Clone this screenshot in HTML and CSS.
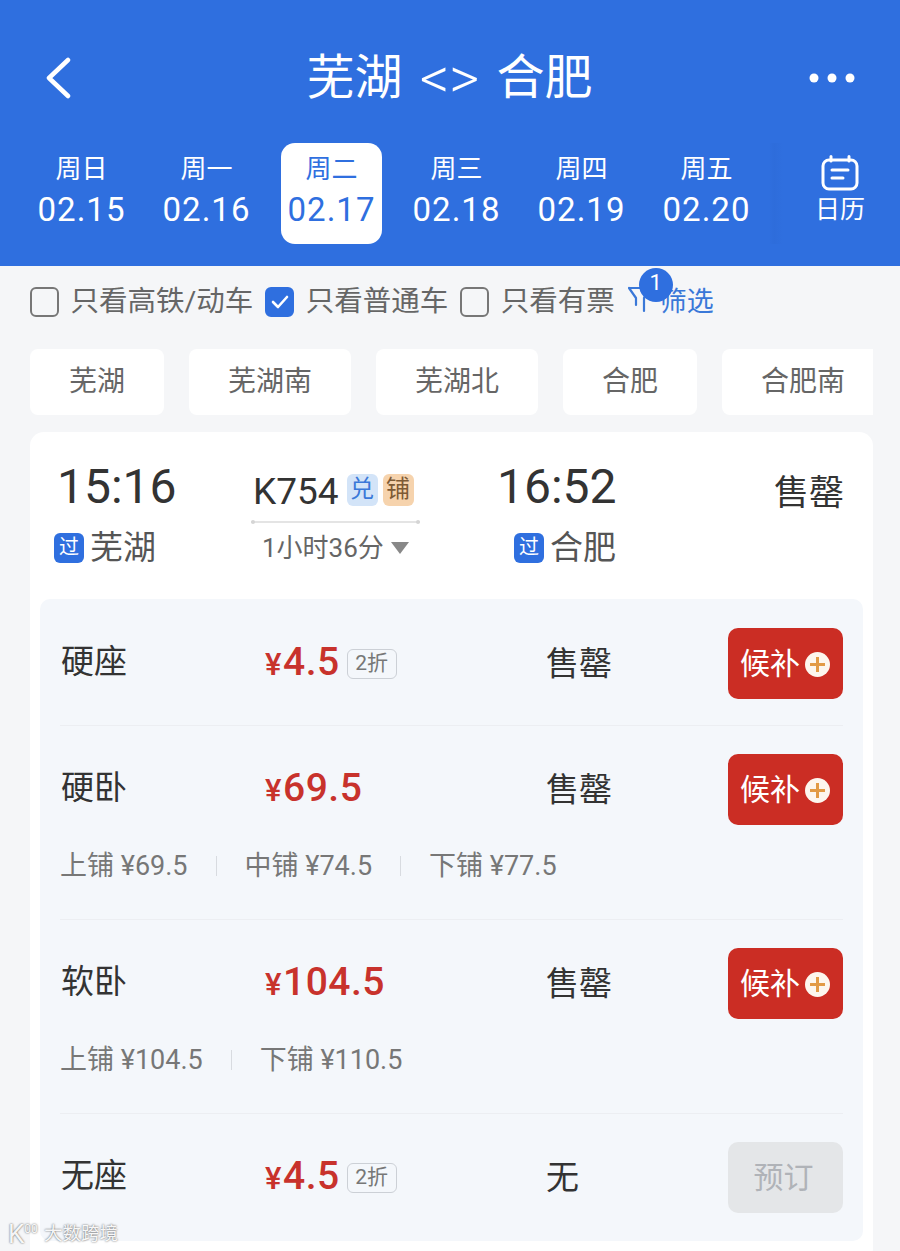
FILE: index.html
```html
<!DOCTYPE html>
<html lang="zh-CN">
<head>
    <meta charset="UTF-8">
    <meta name="viewport" content="width=device-width, initial-scale=1.0">
    <title>芜湖 &lt;&gt; 合肥</title>
    <link rel="stylesheet" href="styles.css">
</head>
<body>
    <div class="page">
        <header class="header">
            <div class="titlebar">
                <svg class="back" width="28" height="42" viewBox="0 0 28 42"><path d="M24 3 L5 21 L24 39" fill="none" stroke="#fff" stroke-width="4.5" stroke-linecap="round" stroke-linejoin="round"/></svg>
                <h1>芜湖<span class="swap">&lt;&gt;</span>合肥</h1>
                <svg class="more" width="46" height="10" viewBox="0 0 46 10"><circle cx="5" cy="5" r="4.5" fill="#fff"/><circle cx="23" cy="5" r="4.5" fill="#fff"/><circle cx="41" cy="5" r="4.5" fill="#fff"/></svg>
            </div>
            <div class="days">
                <div class="day"><span class="week">周日</span><span class="date">02.15</span></div>
                <div class="day"><span class="week">周一</span><span class="date">02.16</span></div>
                <div class="day active"><span class="week">周二</span><span class="date">02.17</span></div>
                <div class="day"><span class="week">周三</span><span class="date">02.18</span></div>
                <div class="day"><span class="week">周四</span><span class="date">02.19</span></div>
                <div class="day"><span class="week">周五</span><span class="date">02.20</span></div>
                <div class="calendar">
                    <svg width="38" height="36" viewBox="0 0 38 36" fill="none" stroke="#fff" stroke-width="3" stroke-linecap="round"><rect x="2" y="5" width="34" height="29" rx="6"/><path d="M10 1.5V6M28 1.5V6M11 15H27M11 23H22"/></svg>
                    <span>日历</span>
                </div>
            </div>
        </header>

        <main class="content">
            <div class="filters">
                <span class="check"></span><span class="check-label">只看高铁/动车</span>
                <span class="check on"><svg width="20" height="16" viewBox="0 0 20 16"><path d="M3 8 L8 13 L17 3" fill="none" stroke="#fff" stroke-width="2.6" stroke-linecap="round" stroke-linejoin="round"/></svg></span><span class="check-label">只看普通车</span>
                <span class="check"></span><span class="check-label">只看有票</span>
                <div class="filter-btn">
                    <svg width="24" height="28" viewBox="0 0 24 28"><path d="M1 3H23L16 13V26M1 3L8 13V20" fill="none" stroke="#3a78d8" stroke-width="2.2" stroke-linecap="round" stroke-linejoin="round"/></svg>
                    <span>筛选</span>
                    <b class="badge">1</b>
                </div>
            </div>

            <div class="stations">
                <div class="chip">芜湖</div>
                <div class="chip">芜湖南</div>
                <div class="chip">芜湖北</div>
                <div class="chip">合肥</div>
                <div class="chip">合肥南</div>
            </div>

            <section class="card">
                <div class="train">
                    <div class="stop">
                        <div class="time">15:16</div>
                        <div class="place"><i class="pass">过</i>芜湖</div>
                    </div>
                    <div class="middle">
                        <div class="code">K754<i class="tag blue">兑</i><i class="tag orange">铺</i></div>
                        <div class="line"></div>
                        <div class="duration">1小时36分<span class="caret"></span></div>
                    </div>
                    <div class="stop arrive">
                        <div class="time">16:52</div>
                        <div class="place"><i class="pass">过</i>合肥</div>
                    </div>
                    <div class="sold">售罄</div>
                </div>

                <div class="panel">
                    <div class="seat">
                        <div class="seat-main">
                            <div class="seat-name">硬座</div>
                            <div class="price"><small>¥</small>4.5<span class="discount">2折</span></div>
                            <div class="left">售罄</div>
                            <button class="btn wait">候补<span class="plus"></span></button>
                        </div>
                    </div>
                    <div class="seat">
                        <div class="seat-main">
                            <div class="seat-name">硬卧</div>
                            <div class="price"><small>¥</small>69.5</div>
                            <div class="left">售罄</div>
                            <button class="btn wait">候补<span class="plus"></span></button>
                        </div>
                        <div class="berths">
                            <span>上铺 ¥69.5</span><span>中铺 ¥74.5</span><span>下铺 ¥77.5</span>
                        </div>
                    </div>
                    <div class="seat">
                        <div class="seat-main">
                            <div class="seat-name">软卧</div>
                            <div class="price"><small>¥</small>104.5</div>
                            <div class="left">售罄</div>
                            <button class="btn wait">候补<span class="plus"></span></button>
                        </div>
                        <div class="berths">
                            <span>上铺 ¥104.5</span><span>下铺 ¥110.5</span>
                        </div>
                    </div>
                    <div class="seat">
                        <div class="seat-main">
                            <div class="seat-name">无座</div>
                            <div class="price"><small>¥</small>4.5<span class="discount">2折</span></div>
                            <div class="left">无</div>
                            <button class="btn off">预订</button>
                        </div>
                    </div>
                </div>
            </section>
        </main>

        <div class="watermark"><span class="mark">K<span class="mark-small">00</span></span><span>大数跨境</span></div>
    </div>
</body>
</html>
```

FILE: styles.css
```css
* {
    box-sizing: border-box;
}
body {
    margin: 0;
    background-color: #f5f6f8;
    font-family: Roboto, "Noto Sans CJK SC", sans-serif;
    color: #333;
}
i {
    font-style: normal;
}
.page {
    position: relative;
    height: 1251px;
    overflow: hidden;
}

/* blue header */
.header {
    height: 266px;
    background-color: #2f6fdf;
    color: white;
}
.titlebar {
    height: 143px;
    padding: 13px 45px 0 44px;
    display: grid;
    grid-template-columns: 1fr auto 1fr;
    align-items: center;
}
.titlebar h1 {
    margin: 0;
    font-size: 48px;
    font-weight: 400;
    line-height: 60px;
    display: flex;
    align-items: center;
}
.swap {
    width: 60px;
    margin: 0 17px;
    font-size: 58px;
    font-weight: 300;
    line-height: 60px;
    text-align: center;
    white-space: nowrap;
}
.more {
    justify-self: end;
}
.days {
    display: flex;
    padding-left: 19px;
}
.day {
    width: 125px;
    height: 101px;
    padding-top: 9px;
    display: flex;
    flex-direction: column;
    align-items: center;
}
.day.active {
    width: 101px;
    margin: 0 12px;
    background-color: white;
    border-radius: 14px;
    color: #2f6fdf;
}
.week {
    font-size: 26px;
    line-height: 34px;
}
.date {
    margin-top: 2px;
    font-size: 33px;
    line-height: 44px;
    letter-spacing: 1px;
}
.calendar {
    flex: 1;
    height: 101px;
    padding: 12px 0 0 11px;
    display: flex;
    flex-direction: column;
    align-items: center;
    background: linear-gradient(to right, rgba(30, 80, 170, 0), rgba(30, 80, 170, 0.08) 5px, rgba(30, 80, 170, 0) 14px);
}
.calendar span {
    font-size: 25px;
    line-height: 36px;
    margin-top: 1px;
}

/* filter row */
.filters {
    height: 72px;
    padding-left: 30px;
    display: flex;
    align-items: center;
}
.check {
    width: 29px;
    height: 30px;
    border: 2.5px solid #777;
    border-radius: 6px;
    display: flex;
    align-items: center;
    justify-content: center;
}
.check.on {
    background-color: #2f6fdf;
    border-color: #2f6fdf;
}
.check-label {
    margin: 0 12px 0 11.5px;
    font-size: 28.5px;
    color: #666;
    line-height: 36px;
    white-space: nowrap;
}
.filter-btn {
    position: relative;
    margin-left: 1px;
    padding-bottom: 6px;
    display: flex;
    align-items: center;
    gap: 8px;
    font-size: 27px;
    color: #3a78d8;
}
.badge {
    position: absolute;
    left: 11px;
    top: -12px;
    width: 34px;
    height: 34px;
    border-radius: 50%;
    background-color: #2f6fdf;
    color: white;
    font-size: 22px;
    font-weight: 400;
    line-height: 30px;
    text-align: center;
}

/* station chips */
.stations {
    margin: 11px 27px 0 30px;
    display: flex;
    gap: 25px;
    overflow: hidden;
}
.chip {
    flex: none;
    height: 66px;
    padding: 0 39px;
    background-color: white;
    border-radius: 8px;
    font-size: 28px;
    line-height: 66px;
    color: #666;
}

/* train card */
.card {
    margin: 17px 27px 0 30px;
    height: 830px;
    background-color: white;
    border-radius: 14px;
}
.train {
    height: 167px;
    padding: 0 29px 0 24px;
    display: flex;
}
.stop {
    width: 198px;
    padding-top: 27px;
}
.stop.arrive {
    width: auto;
    margin-left: 77px;
}
.time {
    margin-left: 3px;
    font-size: 48px;
    line-height: 56px;
}
.arrive .time {
    margin-left: 0;
}
.place {
    margin-top: 13px;
    display: flex;
    align-items: center;
    font-size: 33px;
    line-height: 40px;
    color: #555;
}
.arrive .place {
    margin-left: 17px;
}
.pass {
    width: 30px;
    height: 30px;
    margin-right: 6px;
    border-radius: 6px;
    background-color: #2f6fdf;
    color: white;
    font-size: 20px;
    line-height: 29px;
    text-align: center;
}
.middle {
    width: 169px;
    margin-left: -1px;
    padding-top: 42px;
}
.code {
    display: flex;
    align-items: center;
    padding-left: 2px;
    font-size: 37px;
    line-height: 36px;
    white-space: nowrap;
}
.tag {
    width: 31px;
    height: 32px;
    border-radius: 6px;
    font-size: 24px;
    line-height: 31px;
    text-align: center;
}
.tag.blue {
    margin-left: 8px;
    margin-top: -4px;
    background-color: #d3e4f8;
    color: #3a78d8;
}
.tag.orange {
    margin-left: 5px;
    margin-top: -4px;
    background-color: #f6d3ad;
    color: #7d5a35;
}
.line {
    position: relative;
    height: 2px;
    margin-top: 11px;
    background-color: #e4e4e4;
}
.line::before, .line::after {
    content: "";
    position: absolute;
    top: -1px;
    width: 4px;
    height: 4px;
    border-radius: 50%;
    background-color: #d5d5d5;
}
.line::before {
    left: 0;
}
.line::after {
    right: 0;
}
.duration {
    margin-top: 7px;
    padding-left: 11px;
    display: flex;
    align-items: center;
    font-size: 26px;
    line-height: 36px;
    color: #666;
}
.caret {
    margin-left: 7px;
    width: 0;
    height: 0;
    border-left: 9px solid transparent;
    border-right: 9px solid transparent;
    border-top: 12px solid #888;
}
.sold {
    margin: 40px 0 0 auto;
    font-size: 35px;
    line-height: 44px;
    height: 44px;
}

/* seat list */
.panel {
    margin: 0 10px;
    height: 642px;
    padding: 1px 20px 0;
    background-color: #f4f7fb;
    border-radius: 10px;
}
.seat {
    padding: 28px 0 26px;
    border-bottom: 1px solid #eceef2;
}
.seat:nth-child(2), .seat:nth-child(3) {
    padding-bottom: 33px;
}
.seat:last-child {
    border-bottom: none;
}
.seat-main {
    display: grid;
    grid-template-columns: 205px 282px 181px 115px;
    align-items: center;
    height: 71px;
}
.seat-name {
    padding-left: 1px;
    font-size: 33px;
    line-height: 44px;
    margin-top: -4px;
}
.price {
    display: flex;
    align-items: baseline;
    font-size: 39px;
    font-weight: 500;
    line-height: 44px;
    letter-spacing: 0.5px;
    color: #c8322c;
}
.price small {
    font-size: 31px;
    margin-right: 1px;
}
.discount {
    align-self: center;
    margin-left: 7px;
    width: 50px;
    height: 30px;
    border: 1.5px solid #ccd0d6;
    border-radius: 6px;
    font-size: 21px;
    font-weight: 400;
    line-height: 26px;
    letter-spacing: 0;
    text-align: center;
    color: #777;
}
.left {
    margin-left: -1px;
    font-size: 33px;
    line-height: 44px;
}
.btn {
    width: 115px;
    height: 71px;
    padding: 0 0 6px;
    border: none;
    border-radius: 10px;
    font-family: inherit;
    font-size: 30px;
    display: flex;
    align-items: center;
    justify-content: center;
}
.btn.wait {
    background-color: #cb2d24;
    color: white;
    justify-content: flex-start;
    padding-left: 12px;
}
.btn.off {
    padding-right: 4px;
    background-color: #e4e6e8;
    color: #b0b3b8;
}
.plus {
    position: relative;
    width: 25px;
    height: 25px;
    margin-left: 5px;
    margin-top: 7px;
    border-radius: 50%;
    background-color: #fdf6ee;
}
.plus::before, .plus::after {
    content: "";
    position: absolute;
    background-color: #e29a45;
}
.plus::before {
    left: 5px;
    right: 5px;
    top: 11px;
    height: 3px;
}
.plus::after {
    top: 5px;
    bottom: 5px;
    left: 11px;
    width: 3px;
}
.berths {
    margin-top: 21px;
    height: 40px;
    display: flex;
    align-items: center;
    font-size: 27px;
    color: #777;
}
.berths span {
    padding: 0 28px;
    border-left: 1px solid #d8dbe0;
    line-height: 20px;
}
.berths span:first-child {
    padding-left: 0;
    border-left: none;
}

/* watermark */
.watermark {
    position: absolute;
    left: 8px;
    bottom: 4px;
    display: flex;
    align-items: center;
    gap: 2px;
    font-size: 18.5px;
    line-height: 26px;
    color: rgba(255, 255, 255, 0.95);
    text-shadow: 0 0 2px rgba(0, 0, 0, 0.7);
}
.mark {
    display: flex;
    align-items: flex-start;
    width: 34px;
    font-size: 26px;
}
.mark-small {
    font-size: 12px;
    line-height: 16px;
}
```
